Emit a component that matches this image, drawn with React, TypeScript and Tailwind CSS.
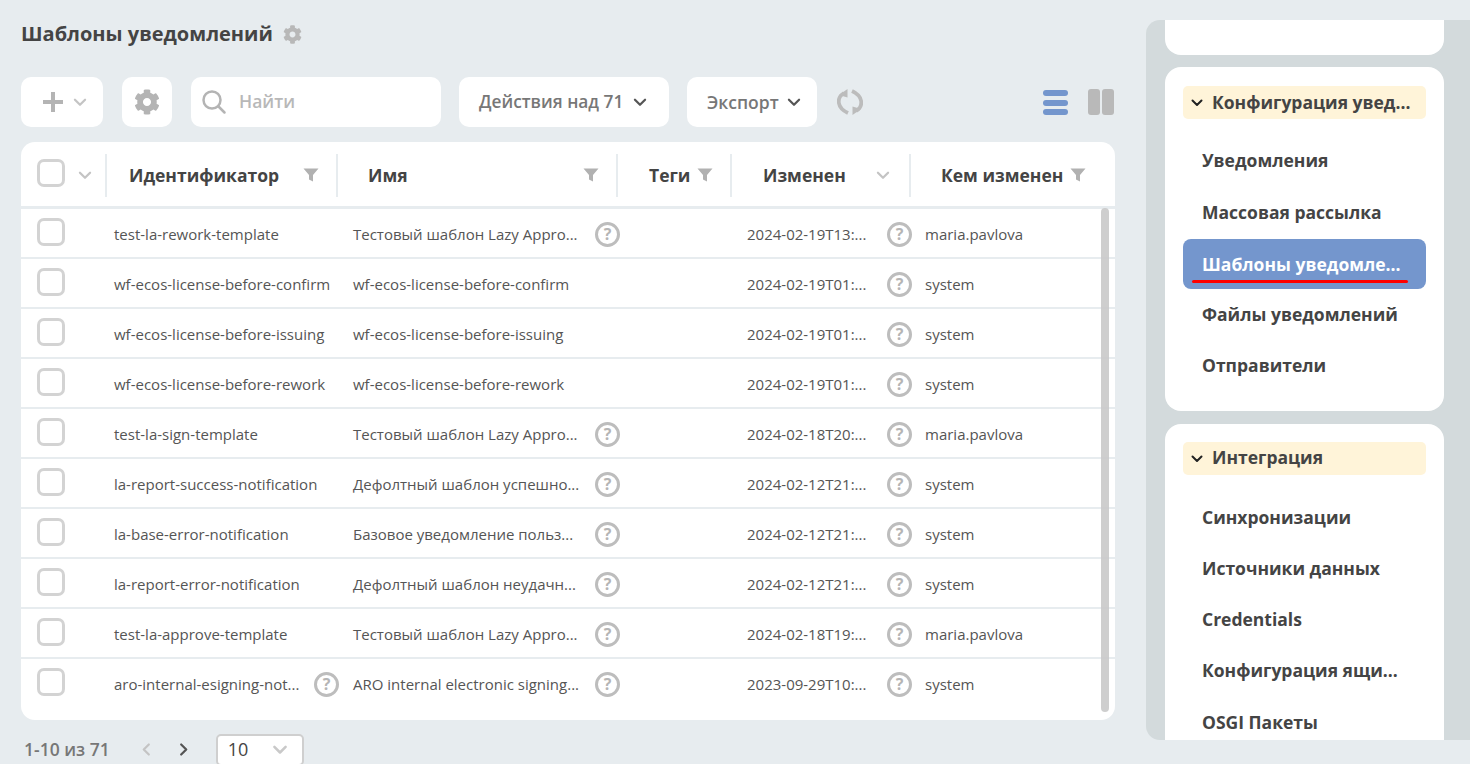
import React from "react";
import { FaCog } from "react-icons/fa";

const Chevron = ({ className = "", w = 2 }: { className?: string; w?: number }) => (
  <svg viewBox="0 0 12 8" className={className} fill="none" stroke="currentColor" strokeWidth={w} strokeLinecap="round" strokeLinejoin="round">
    <path d="M1.5 1.5 6 6l4.5-4.5" />
  </svg>
);
const Funnel = ({ className = "" }: { className?: string }) => (
  <svg viewBox="0 0 16 14" className={`w-4 h-[14px] text-[#b1b1b1] ${className}`} fill="currentColor">
    <path d="M0.5 0.5h15L10 7v6.5L6 11.5V7z" />
  </svg>
);
const Help = () => (
  <span className="w-[25px] h-[25px] shrink-0 rounded-full border-[3px] border-[#bdbdbd] flex items-center justify-center text-[16px] font-bold leading-none text-[#b5b5b5]">?</span>
);
const Check = () => (
  <span className="block w-[28px] h-[28px] rounded-[7px] border-[3px] border-[#d3d3d3] bg-white" />
);

type Row = [string, string, string, string, boolean?, boolean?];
const rows: Row[] = [
  ["test-la-rework-template", "Тестовый шаблон Lazy Appro...", "2024-02-19T13:...", "maria.pavlova", true],
  ["wf-ecos-license-before-confirm", "wf-ecos-license-before-confirm", "2024-02-19T01:...", "system"],
  ["wf-ecos-license-before-issuing", "wf-ecos-license-before-issuing", "2024-02-19T01:...", "system"],
  ["wf-ecos-license-before-rework", "wf-ecos-license-before-rework", "2024-02-19T01:...", "system"],
  ["test-la-sign-template", "Тестовый шаблон Lazy Appro...", "2024-02-18T20:...", "maria.pavlova", true],
  ["la-report-success-notification", "Дефолтный шаблон успешно...", "2024-02-12T21:...", "system", true],
  ["la-base-error-notification", "Базовое уведомление польз...", "2024-02-12T21:...", "system", true],
  ["la-report-error-notification", "Дефолтный шаблон неудачн...", "2024-02-12T21:...", "system", true],
  ["test-la-approve-template", "Тестовый шаблон Lazy Appro...", "2024-02-18T19:...", "maria.pavlova", true],
  ["aro-internal-esigning-not...", "ARO internal electronic signing...", "2023-09-29T10:...", "system", true, true],
];

const Sep = () => <span className="w-[2px] h-[43px] bg-[#e7ecef] shrink-0" />;

const MenuHead = ({ children, lift }: { children: React.ReactNode; lift?: boolean }) => (
  <div className="h-[33px] rounded-[5px] bg-[#fff4d9] flex items-center pl-[8px] text-[17.5px] font-bold text-[#444444] whitespace-nowrap">
    <Chevron className="w-[12px] h-[8px] text-[#222222] mr-[9px]" />
    <span className={lift ? "-translate-y-[1px]" : ""}>{children}</span>
  </div>
);
const MenuItem = ({ children, active, className = "h-[51px]" }: { children: React.ReactNode; active?: boolean; className?: string }) => (
  <div className={`relative flex items-center pl-[19px] text-[17.5px] font-bold whitespace-nowrap rounded-[8px] ${className} ${active ? "bg-[#7496cd] text-white" : "text-[#444444]"}`}>
    {children}
    {active && <span className="absolute left-[9px] bottom-[6px] w-[216px] h-[3px] rounded-full bg-[#ff0000]" />}
  </div>
);

export default function App() {
  return (
    <div className="w-[1470px] h-[764px] overflow-hidden bg-[#e7ecef] flex text-[#444444]" style={{ fontFamily: '"Open Sans", sans-serif' }}>
      <main className="w-[1094px] ml-[21px] shrink-0 flex flex-col">
        <div className="h-[68px] shrink-0 pt-[20px] flex items-start">
          <h1 className="text-[20px] leading-[28px] font-bold text-[#444444]">Шаблоны уведомлений</h1>
          <FaCog className="w-[19px] h-[19px] ml-[10px] mt-[5px] text-[#b8b8b8]" />
        </div>
        <div className="mt-[9px] h-[50px] shrink-0 flex items-center">
          <div className="w-[82px] h-[50px] bg-white rounded-[10px] flex items-center pl-[21px]">
            <svg viewBox="0 0 22 22" className="w-[22px] h-[22px] text-[#b4b4b4]" fill="currentColor"><path d="M9 1h4v8h8v4h-8v8H9v-8H1V9h8z" /></svg>
            <Chevron className="w-[14px] h-[9px] ml-[9px] text-[#c4c4c4]" />
          </div>
          <div className="ml-[19px] w-[50px] h-[50px] bg-white rounded-[10px] flex items-center justify-center">
            <FaCog className="w-[26px] h-[26px] text-[#b4b4b4]" />
          </div>
          <div className="ml-[19px] w-[250px] h-[50px] bg-white rounded-[10px] flex items-center pl-[10px]">
            <svg viewBox="0 0 26 26" className="w-[26px] h-[26px] text-[#b4b4b4]" fill="none" stroke="currentColor" strokeWidth="2.5" strokeLinecap="round"><circle cx="11" cy="11" r="8.5" /><path d="m17.5 17.5 6 6" /></svg>
            <span className="ml-[12px] text-[17.5px] font-semibold text-[#b8b8b8] -mt-[1px]">Найти</span>
          </div>
          <div className="ml-[18px] w-[210px] h-[50px] bg-white rounded-[10px] flex items-center pl-[20px] text-[17.3px] font-semibold text-[#777777] whitespace-nowrap">
            Действия над 71
            <Chevron className="w-[14px] h-[9px] ml-[10px] text-[#555555]" />
          </div>
          <div className="ml-[18px] w-[130px] h-[50px] bg-white rounded-[10px] flex items-center pl-[20px] text-[17.5px] font-semibold text-[#777777] whitespace-nowrap">
            Экспорт
            <Chevron className="w-[14px] h-[9px] ml-[8px] text-[#555555]" />
          </div>
          <svg viewBox="0 0 26 26" className="ml-[20px] w-[26px] h-[26px] text-[#bcbcbc]" fill="none" stroke="currentColor" strokeWidth="3.8">
            <path d="M7 4C-1 9 0 19 11 24" />
            <path d="M19 22C27 17 26 7 15 2" />
            <path d="M10.500 0V8.500L2 6zM15.500 26V17.500L24 20z" fill="currentColor" stroke="none" />
          </svg>
          <div className="ml-auto mr-[1px] flex items-center">
            <div className="w-[25px] flex flex-col">
              <span className="h-[6px] rounded-[3px] bg-[#7496cd]" />
              <span className="h-[6px] mt-[4px] rounded-[3px] bg-[#7496cd]" />
              <span className="h-[6px] mt-[3px] rounded-[3px] bg-[#7496cd]" />
            </div>
            <div className="ml-[20px] flex gap-[2px]">
              <span className="w-[12px] h-[26px] rounded-[3px] bg-[#b9b9b9]" />
              <span className="w-[12px] h-[26px] rounded-[3px] bg-[#b9b9b9]" />
            </div>
          </div>
        </div>
        <div className="relative mt-[15px] h-[578px] shrink-0 bg-white rounded-[14px] overflow-hidden">
          <div className="h-[67px] pt-[2px] flex items-center border-b-[3px] border-[#e7ecef] text-[17.5px] font-bold text-[#444444] whitespace-nowrap">
            <div className="w-[84px] flex items-center pl-[16px]">
              <span className="-translate-y-[2px]"><Check /></span>
              <Chevron className="w-[14px] h-[9px] ml-[13px] text-[#c4c4c4]" />
            </div>
            <Sep />
            <div className="w-[229px] flex items-center pl-[22px]">
              <span>Идентификатор</span>
              <Funnel className="ml-[24px]" />
            </div>
            <Sep />
            <div className="w-[278px] flex items-center pl-[30px] pr-[17px] justify-between">
              <span>Имя</span>
              <Funnel />
            </div>
            <Sep />
            <div className="w-[112px] flex items-center pl-[31px]">
              <span>Теги</span>
              <Funnel className="ml-[7px]" />
            </div>
            <Sep />
            <div className="w-[177px] flex items-center pl-[31px] pr-[19px] justify-between">
              <span>Изменен</span>
              <Chevron className="w-[14px] h-[9px] text-[#c4c4c4]" />
            </div>
            <Sep />
            <div className="flex-1 flex items-center pl-[30px]">
              <span>Кем изменен</span>
              <Funnel className="ml-[7px]" />
            </div>
          </div>
          {rows.map((r, i) => (
            <div key={i} className={`h-[50px] pt-[2px] flex items-center border-b-[2px] text-[15px] text-[#555555] whitespace-nowrap ${i === rows.length - 1 ? "border-transparent" : "border-[#e7ecef]"}`}>
              <div className="w-[93px] pl-[16px]"><span className="block -translate-y-[2px]"><Check /></span></div>
              <div className="w-[239px] flex items-center justify-between pr-[14px]">
                <span>{r[0]}</span>
                {r[5] && <Help />}
              </div>
              <div className="w-[267px] flex items-center justify-between">
                <span>{r[1]}</span>
                {r[4] && <Help />}
              </div>
              <div className="w-[127px]" />
              <div className="w-[165px] flex items-center justify-between">
                <span>{r[2]}</span>
                <Help />
              </div>
              <div className="pl-[13px]">{r[3]}</div>
            </div>
          ))}
          <span className="absolute right-[6px] top-[66px] bottom-[8px] w-[8px] rounded-full bg-[#c9c9c9]/90" />
        </div>
        <div className="mt-[13px] h-[32px] shrink-0 flex items-center pl-[3px] text-[#666666]">
          <span className="text-[17.5px] font-semibold text-[#777777]">1-10 из 71</span>
          <Chevron className="w-[14px] h-[9px] ml-[29px] rotate-90 text-[#c4c4c4]" />
          <Chevron className="w-[14px] h-[9px] ml-[24px] -rotate-90 text-[#555555]" />
          <div className="ml-[25px] w-[88px] h-[32px] mt-[1px] bg-white rounded-[5px] border-2 border-[#cfcfcf] flex items-center pl-[10px]">
            <span className="text-[18px] text-[#444444]">10</span>
            <Chevron className="w-[16px] h-[10px] ml-auto mr-[14px] text-[#c9c9c9]" />
          </div>
        </div>
      </main>
      <aside className="ml-[31px] mt-[20px] h-[720px] flex-1 bg-[#d3dadc] rounded-l-[14px] overflow-hidden pl-[19px] pr-[26px]">
        <div className="h-[35px] bg-white rounded-b-[16px]" />
        <div className="mt-[12px] h-[344px] bg-white rounded-[16px] pt-[19px] px-[18px]">
          <MenuHead>Конфигурация увед...</MenuHead>
          <div className="mt-[16px]">
            <MenuItem>Уведомления</MenuItem>
            <MenuItem className="h-[51px] mt-[1px] mb-[1px]">Массовая рассылка</MenuItem>
            <MenuItem active className="h-[50px]">Шаблоны уведомле...</MenuItem>
            <MenuItem>Файлы уведомлений</MenuItem>
            <MenuItem>Отправители</MenuItem>
          </div>
        </div>
        <div className="mt-[13px] h-[400px] bg-white rounded-t-[16px] pt-[18px] px-[18px]">
          <MenuHead lift>Интеграция</MenuHead>
          <div className="mt-[17px]">
            <MenuItem>Синхронизации</MenuItem>
            <MenuItem>Источники данных</MenuItem>
            <MenuItem>Credentials</MenuItem>
            <MenuItem>Конфигурация ящи...</MenuItem>
            <MenuItem className="h-[51px] mt-[1px]">OSGI Пакеты</MenuItem>
          </div>
        </div>
      </aside>
    </div>
  );
}
